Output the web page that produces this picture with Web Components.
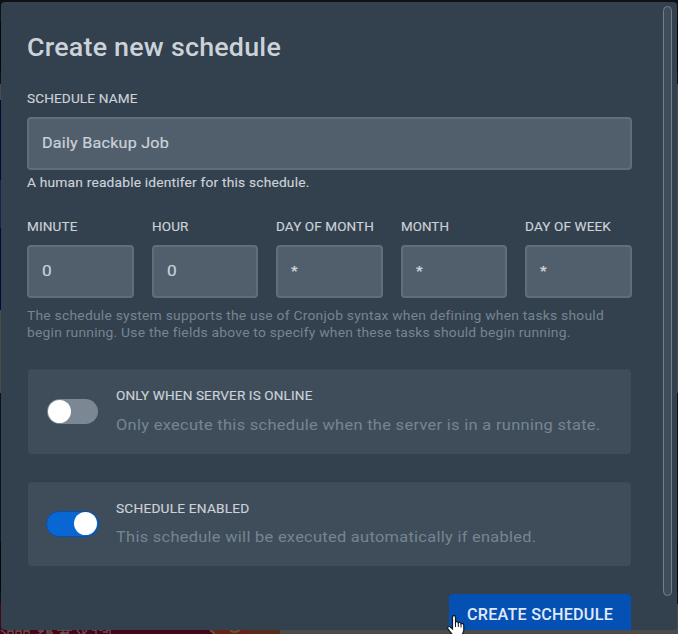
<!DOCTYPE html>
<html lang="en"><head><meta charset="utf-8"><title>Create new schedule</title>
<style>
html,body{margin:0;width:678px;height:634px;overflow:hidden;background:#0e1216}
body{font-family:Roboto,"Liberation Sans",sans-serif;color:#cbd2d9}
</style></head><body>
<schedule-page></schedule-page>
<script>
const define=(name,html,setup)=>{
  const t=document.createElement('template');t.innerHTML=html;
  customElements.define(name,class extends HTMLElement{
    connectedCallback(){
      if(this.shadowRoot)return;
      this.attachShadow({mode:'open'}).append(t.content.cloneNode(true));
      if(setup)setup(this,this.shadowRoot);
    }
  });
};
// Spreads a line of text to a given width: half by wider glyphs, half by letter-spacing.
define('fit-text',`<style>:host{display:block;white-space:pre}span{display:inline-block;transform-origin:0 50%}</style><span><slot></slot></span>`,(h,r)=>{
  const s=r.querySelector('span'),n=h.textContent.length,w=s.getBoundingClientRect().width,goal=+h.getAttribute('w');
  const k=1+(goal/w-1)*.55;
  s.style.letterSpacing=((goal/k-w)/n)+'px';
  s.style.transform='scaleX('+k+')';
});
define('text-field',`<style>
:host{display:block;min-width:0}
.l{font-size:13.3px;line-height:18px;height:27px;color:#cbd2d9;-webkit-text-stroke:.15px}
.b{box-sizing:border-box;height:53px;border:2px solid #606d7b;border-radius:4px;background:#515f6c;padding:0 13px 2px;display:flex;align-items:center;font-size:15.5px;color:#cbd2d9;-webkit-text-stroke:.2px}
:host([star]) .b{font-size:13.5px;font-weight:700;padding-bottom:3px}
</style><div class="l"><slot name="label"></slot></div><div class="b"><slot></slot></div>`);
define('toggle-switch',`<style>
:host{display:block;box-sizing:border-box;width:51px;height:25px;border-radius:13px;background:#7b8793;padding:1px}
i{display:block;width:23px;height:23px;border-radius:50%;background:#fff}
:host([on]){width:53px;height:26px;margin-left:-1px;background:#0967d3;border:1px solid #0550b3;padding:.5px 1px}
:host([on]) i{margin-left:auto}
</style><i></i>`);
define('option-card',`<style>
:host{display:grid;grid-template-columns:51px 1fr;column-gap:18px;align-items:center;box-sizing:border-box;background:#3f4d5a;border-radius:3px;padding:0 19px 2px;border-top:1px solid #3b4855}
.t{font-size:13.3px;line-height:18px;color:#cbd2d9;margin-bottom:9px;-webkit-text-stroke:.15px}
.d{font-size:15.5px;line-height:22px;color:#768591}
:host([low]) .t{padding-top:1px;margin-bottom:8px}
</style><slot name="toggle"></slot><div><div class="t"><slot name="title"></slot></div><div class="d"><slot></slot></div></div>`);
define('primary-button',`<style>
:host{display:flex;box-sizing:border-box;width:182px;height:44px;padding:10px 0 0 17px;background:#0550b3;border:1px solid #0552bb;border-radius:4px;font-size:15.7px;line-height:20px;font-weight:500;color:#e0eafa}
</style><slot></slot>`);
define('page-backdrop',`<style>:host{display:block;width:678px;height:634px}svg{display:block}</style>
<svg width="678" height="634" viewBox="0 0 678 634">
<path fill="#0e1216" d="M0 0h678v634H0z"/>
<path fill="#050607" d="M0 22h1v49H0zM676 22h2v49h-2zM676 542h2v49h-2zM0 542h1v49H0z"/>
<path fill="#4b4b4b" d="M0 84h1v16H0zM676 84h2v309h-2zM0 310h1v83H0z"/>
<path fill="#000a36" d="M0 100h1v210H0z"/><path fill="#14264f" d="M0 180h1v48H0z"/>
<path fill="#4b4b4b" d="M270 629h408v5H270zM676 604h2v30h-2z"/>
<path fill="#45051a" d="M0 604h1v30H0zM0 629h222v5H0z"/>
<g fill="none" stroke="#6b5550" stroke-width="1.3">
<path d="M1 630l5 4M8 634v-3h5v3M16 634v-3h5v3M24 634v-3h5v3M38 631h6m-5 3l4-3M47 629v4h6m-6-2h5M57 630h15m-12 3h9m-6-4v5m5-5v5M77 630l3 4m3-4v4m4-4l-3 4M92 630h4v4m3-4h4m3 0h4v4m-7-2h5"/></g>
<path fill="#5a2c1b" d="M209 629h71v5h-64z"/><path fill="#682018" d="M216 629h12l3 5h-10zM237 629h14l-4 5h-9z"/>
<path stroke="#6b532c" stroke-width="2" fill="none" d="M210 630l5 4M230 630q4 4 10 0"/>
</svg>`);
define('hand-cursor',`<style>:host{display:block}svg{display:block}</style>
<svg width="20" height="24" viewBox="0 0 20 24"><path d="M5.5 1.8c0-1.7 3-1.7 3 0v5.4c.8-1 2.6-.7 2.8.5 1-.7 2.5-.3 2.7 1 1-.6 2.8 0 2.8 1.5V15c0 2-1.5 4-1.8 6v3H6.500v-3C4.500 18.500 2.500 16 1 13.800c-1-1.600.8-3 2.300-1.800l2.200 2z" fill="#fff" stroke="#111820" stroke-width="1.200"/><path d="M8.500 7v5M11.300 8v4M14 9v3.500" stroke="#111820" stroke-width="1" fill="none"/></svg>`);
define('schedule-page',`<style>
:host{display:block;position:relative;width:678px;height:634px;overflow:hidden}
main{position:absolute;left:1px;top:2px;width:675.5px;height:627.7px;box-sizing:border-box;border-radius:4px;background:#33404d;padding:28px 44.5px 0 26px;overflow:hidden}
h1{font-weight:500;font-size:26.3px;line-height:34px;margin:0;color:#cbd2d9}
.name{margin-top:26px}
.help{font-size:13.3px;line-height:18px;margin-top:4px;height:18px;-webkit-text-stroke:.15px}
.cron{display:grid;grid-template-columns:repeat(5,1fr);gap:18px;margin-top:26px}
.note{font-size:13.3px;line-height:17.3px;color:#768591;margin-top:9px;height:62px}
option-card{margin:0 0 28px 1px;width:603px;height:85px}
option-card+option-card{height:84px}
primary-button{margin-left:auto;margin-right:.7px}
.bar{position:absolute;left:663px;top:6px;width:9px;height:590px;box-sizing:border-box;border:1px solid #73808c;border-radius:4.5px;background:#3f4d5a}
hand-cursor{position:absolute;left:447px;top:614.5px}
</style>
<page-backdrop></page-backdrop>
<main>
<h1><fit-text w="254">Create new schedule</fit-text></h1>
<text-field class="name"><fit-text slot="label" w="110.5">SCHEDULE NAME</fit-text><fit-text w="127">Daily Backup Job</fit-text></text-field>
<div class="help"><fit-text w="282.5">A human readable identifer for this schedule.</fit-text></div>
<div class="cron">
<text-field><fit-text slot="label" w="50.5">MINUTE</fit-text><fit-text w="10.5">0</fit-text></text-field>
<text-field><fit-text slot="label" w="36.5">HOUR</fit-text><fit-text w="10.5">0</fit-text></text-field>
<text-field star><fit-text slot="label" w="98">DAY OF MONTH</fit-text><fit-text w="7">*</fit-text></text-field>
<text-field star><fit-text slot="label" w="48">MONTH</fit-text><fit-text w="7">*</fit-text></text-field>
<text-field star><fit-text slot="label" w="86">DAY OF WEEK</fit-text><fit-text w="7">*</fit-text></text-field>
</div>
<div class="note"><fit-text w="576.5">The schedule system supports the use of Cronjob syntax when defining when tasks should</fit-text><fit-text w="543">begin running. Use the fields above to specify when these tasks should begin running.</fit-text></div>
<option-card><toggle-switch slot="toggle"></toggle-switch><fit-text slot="title" w="196.5">ONLY WHEN SERVER IS ONLINE</fit-text><fit-text w="484.5">Only execute this schedule when the server is in a running state.</fit-text></option-card>
<option-card low><toggle-switch slot="toggle" on></toggle-switch><fit-text slot="title" w="133.5">SCHEDULE ENABLED</fit-text><fit-text w="420.5">This schedule will be executed automatically if enabled.</fit-text></option-card>
<primary-button><fit-text w="146">CREATE SCHEDULE</fit-text></primary-button>
</main>
<div class="bar"></div>
<hand-cursor></hand-cursor>`);
</script></body></html>
